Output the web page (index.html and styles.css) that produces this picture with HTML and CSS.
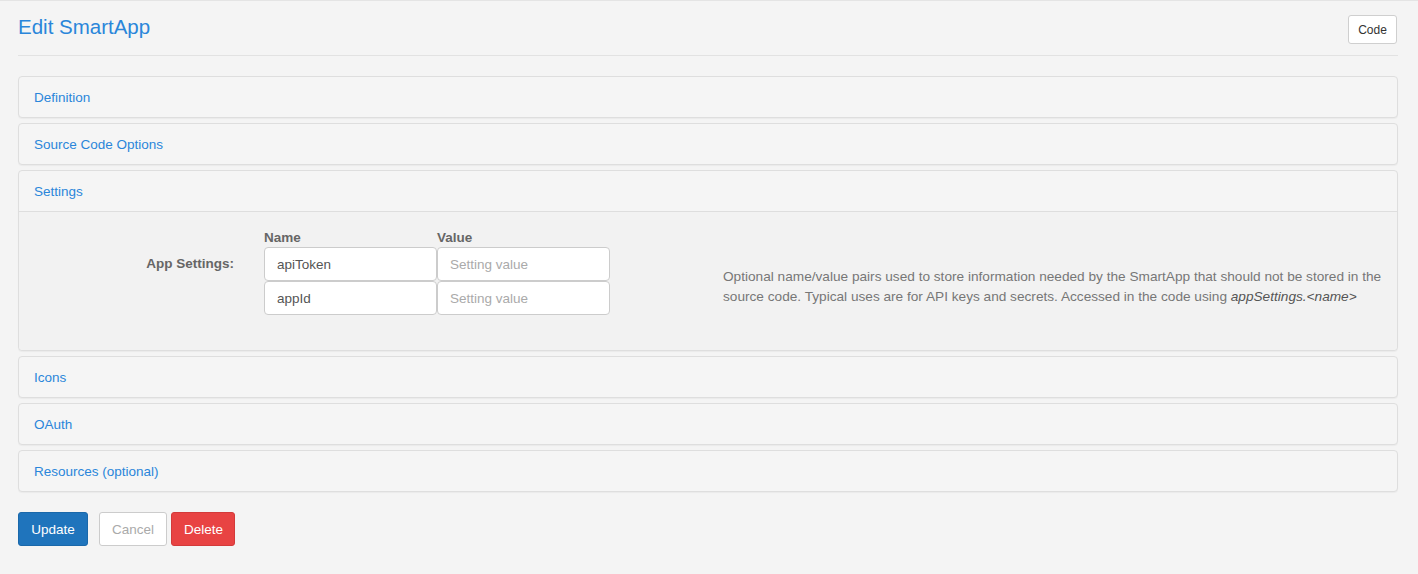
FILE: index.html
```html
<!DOCTYPE html>
<html>
<head>
<meta charset="utf-8">
<link rel="stylesheet" href="styles.css">
</head>
<body>
<div class="page">
  <header class="page-header">
    <h1 class="title">Edit SmartApp</h1>
    <button class="btn-code">Code</button>
  </header>

  <div class="panel"><div class="panel-heading">Definition</div></div>
  <div class="panel"><div class="panel-heading">Source Code Options</div></div>
  <div class="panel">
    <div class="panel-heading open">Settings</div>
    <div class="panel-body">
      <div class="settings-row">
        <div class="label-col">App Settings:</div>
        <div class="table-col">
          <div class="grid">
            <div class="col-head">Name</div>
            <div class="col-head">Value</div>
            <input class="field" value="apiToken">
            <input class="field" placeholder="Setting value">
            <input class="field" value="appId">
            <input class="field" placeholder="Setting value">
          </div>
        </div>
        <div class="help-col">
          <p class="help">Optional name/value pairs used to store information needed by the SmartApp that should not be stored in the source code. Typical uses are for API keys and secrets. Accessed in the code using <em>appSettings.&lt;name&gt;</em></p>
        </div>
      </div>
    </div>
  </div>
  <div class="panel"><div class="panel-heading">Icons</div></div>
  <div class="panel"><div class="panel-heading">OAuth</div></div>
  <div class="panel"><div class="panel-heading">Resources (optional)</div></div>

  <div class="actions">
    <button class="btn btn-primary">Update</button>
    <button class="btn btn-cancel">Cancel</button>
    <button class="btn btn-danger">Delete</button>
  </div>
</div>
</body>
</html>
```

FILE: styles.css
```css
* { box-sizing: border-box; }
html, body {
  margin: 0;
  padding: 0;
  background: #f4f4f4;
  font-family: "Liberation Sans", Arial, sans-serif;
  color: #555;
}
body { border-top: 1px solid #e4e4e4; }
.page {
  padding: 0 20px 0 18px;
}
.page-header {
  height: 55px;
  display: flex;
  justify-content: space-between;
  align-items: flex-start;
  border-bottom: 1px solid #e2e2e2;
  margin-bottom: 20px;
}
.title {
  margin: 11px 0 0 0;
  font-size: 20.5px;
  line-height: 30px;
  font-weight: normal;
  color: #2a86da;
}
.btn-code {
  margin-top: 14px;
  margin-right: 1px;
  width: 49px;
  height: 29px;
  background: #fff;
  border: 1px solid #cfcfcf;
  border-radius: 3px;
  font-family: "Liberation Sans", Arial, sans-serif;
  font-size: 12px;
  color: #333;
  padding: 0;
}
.panel {
  border: 1px solid #dedede;
  border-radius: 4px;
  background: #f5f5f5;
  margin-bottom: 5px;
  box-shadow: 0 1px 1px rgba(0,0,0,0.04);
}
.panel-heading {
  padding: 11px 15px 9px 15px;
  font-size: 13.5px;
  line-height: 20px;
  color: #2a86da;
}
.panel-heading.open {
  border-bottom: 1px solid #dedede;
}
.panel-body {
  background: #f2f2f2;
  padding: 16px 0 35px 0;
  border-radius: 0 0 4px 4px;
}
.settings-row {
  display: flex;
}
.label-col {
  width: 230px;
  padding-right: 15px;
  padding-top: 26px;
  text-align: right;
  font-weight: bold;
  font-size: 13.5px;
  line-height: 20px;
  color: #666;
}
.table-col {
  width: 459px;
  padding: 0 15px;
}
.grid {
  display: grid;
  grid-template-columns: 173px 173px;
  grid-template-rows: 19px 34px 34px;
}
.col-head {
  font-weight: bold;
  font-size: 13.5px;
  line-height: 20px;
  color: #666;
}
.field {
  height: 34px;
  width: 173px;
  border: 1px solid #cccccc;
  border-radius: 4px;
  background: #fff;
  padding: 0 12px;
  font-family: "Liberation Sans", Arial, sans-serif;
  font-size: 13.5px;
  color: #555;
  margin: 0;
  outline: none;
}
.field::placeholder { color: #aaa; }
.help-col {
  flex: 1;
  padding: 0 15px;
}
.help {
  margin: 39px 0 0 0;
  font-size: 13.65px;
  line-height: 20px;
  color: #777;
}
.help em { color: #555; }
.actions {
  display: flex;
  margin-top: 20px;
}
.btn {
  height: 34px;
  padding: 0 12px;
  border-radius: 3px;
  font-family: "Liberation Sans", Arial, sans-serif;
  font-size: 13.5px;
  border: 1px solid transparent;
}
.btn-primary {
  width: 70px;
  background: #1f74bc;
  border-color: #1a68aa;
  color: #fff;
}
.btn-cancel {
  width: 68px;
  margin-left: 11px;
  background: #fff;
  border-color: #cccccc;
  color: #aaa;
}
.btn-danger {
  width: 64px;
  margin-left: 4px;
  background: #e84343;
  border-color: #d33a3a;
  color: #fff;
}
```
